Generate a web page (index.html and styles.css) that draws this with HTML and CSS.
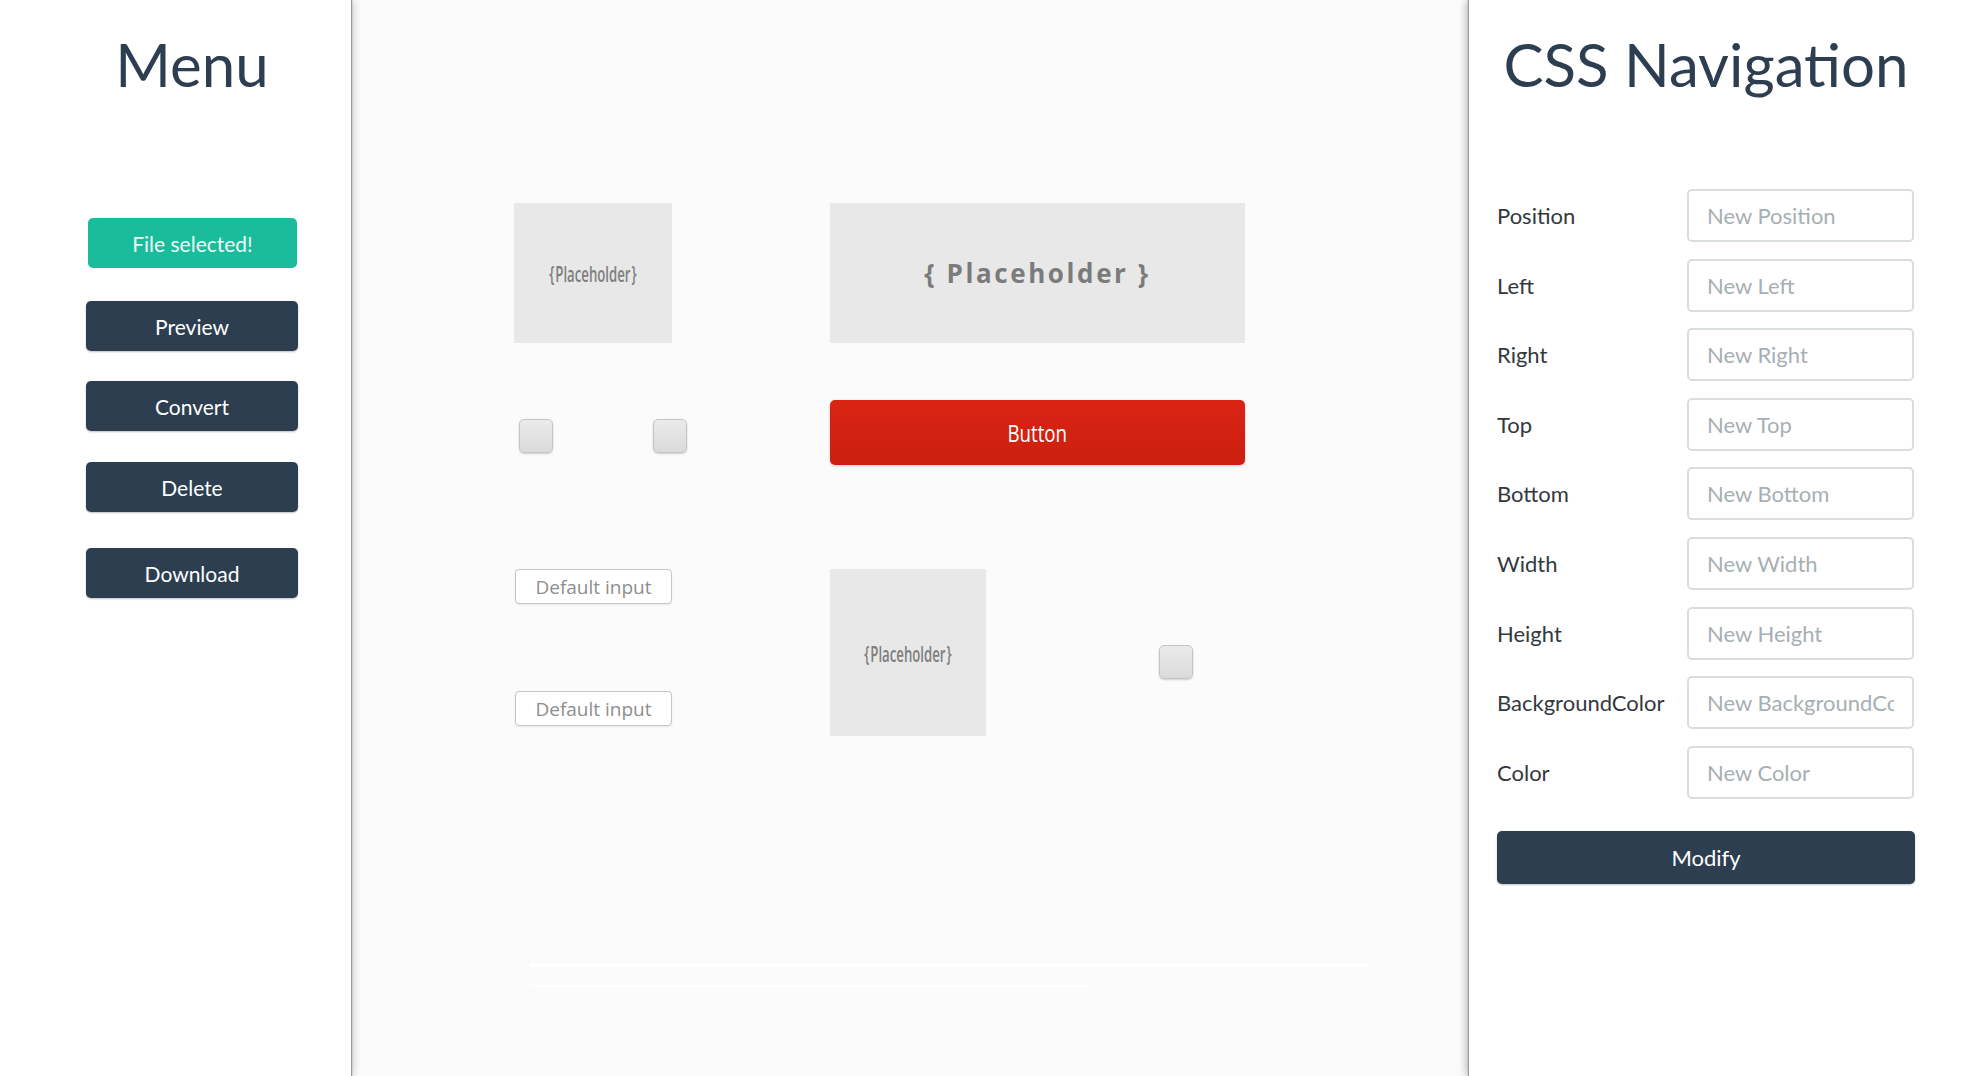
FILE: index.html
```html
<!DOCTYPE html>
<html lang="en">
<head>
<meta charset="utf-8">
<title>CSS Navigation</title>
<link rel="stylesheet" href="styles.css">
</head>
<body>
<div class="app">
  <aside class="menu">
    <h1 class="title">Menu</h1>
    <div class="menu-buttons">
      <label class="btn btn-file">File selected!</label>
      <button class="btn btn-dark btn-preview">Preview</button>
      <button class="btn btn-dark btn-convert">Convert</button>
      <button class="btn btn-dark btn-delete">Delete</button>
      <button class="btn btn-dark btn-download">Download</button>
    </div>
  </aside>

  <main class="stage">
    <div class="row row-1">
      <div class="ph ph-small"><span class="cond">{ Placeholder }</span></div>
      <div class="ph ph-large"><span class="ph-bold">{ Placeholder }</span></div>
    </div>
    <div class="row row-2">
      <div class="checks">
        <span class="check"></span>
        <span class="check"></span>
      </div>
      <button class="red-btn"><span class="cond-btn">Button</span></button>
    </div>
    <div class="row row-3">
      <div class="inputs">
        <input class="def-input" type="text" placeholder="Default input">
        <input class="def-input" type="text" placeholder="Default input">
      </div>
      <div class="ph ph-tall"><span class="cond">{ Placeholder }</span></div>
      <span class="check check-solo"></span>
    </div>
    <div class="line line-1"></div>
    <div class="line line-2"></div>
  </main>

  <aside class="nav">
    <h1 class="title">CSS Navigation</h1>
    <form class="props">
      <label class="prop-label">Position</label><input class="prop-input" placeholder="New Position">
      <label class="prop-label">Left</label><input class="prop-input" placeholder="New Left">
      <label class="prop-label">Right</label><input class="prop-input" placeholder="New Right">
      <label class="prop-label">Top</label><input class="prop-input" placeholder="New Top">
      <label class="prop-label">Bottom</label><input class="prop-input" placeholder="New Bottom">
      <label class="prop-label">Width</label><input class="prop-input" placeholder="New Width">
      <label class="prop-label">Height</label><input class="prop-input" placeholder="New Height">
      <label class="prop-label">BackgroundColor</label><input class="prop-input" placeholder="New BackgroundColor">
      <label class="prop-label">Color</label><input class="prop-input" placeholder="New Color">
    </form>
    <button class="btn btn-dark btn-modify">Modify</button>
  </aside>
</div>
</body>
</html>
```

FILE: styles.css
```css
* { box-sizing: border-box; }

html, body {
  margin: 0;
  padding: 0;
  height: 100%;
  overflow: hidden;
}

body {
  font-family: Lato, "Open Sans", "Liberation Sans", sans-serif;
  background: #fbfbfb;
}

.app {
  display: flex;
  height: 1076px;
}

/* ---------- side panels ---------- */
.menu {
  width: 351px;
  flex: none;
  background: #fff;
  padding-left: 86px;
  position: relative;
  z-index: 2;
  box-shadow: 1px 0 1px #9c9c9c, 2px 0 8px rgba(0, 0, 0, 0.22);
}

.nav {
  width: 505px;
  flex: none;
  background: #fff;
  padding-left: 28px;
  position: relative;
  z-index: 2;
  box-shadow: -1px 0 1px #9c9c9c, -3px 0 8px rgba(0, 0, 0, 0.25);
}

.title {
  margin: 28px 0 0;
  font-family: Lato, sans-serif;
  font-weight: 400;
  font-size: 60px;
  line-height: 72px;
  color: #2c3e50;
  text-align: center;
  white-space: nowrap;
}

.menu .title { width: 212px; }
.nav .title { width: 418px; }

.menu-buttons {
  display: flex;
  flex-direction: column;
  width: 212px;
  margin-top: 118px;
}

.btn {
  display: flex;
  align-items: center;
  justify-content: center;
  border: none;
  border-radius: 5px;
  font-family: Lato, sans-serif;
  font-size: 21px;
  font-weight: 400;
  color: #fff;
  padding: 0;
  height: 50px;
}

.btn-dark {
  background: #2c3e50;
  box-shadow: 0 1px 2px rgba(0, 0, 0, 0.25);
}

.btn-file {
  background: #1abc9c;
  color: #eafaf6;
  width: 209px;
  margin-left: 2px;
}

.btn-preview { margin-top: 33px; }
.btn-convert { margin-top: 30px; }
.btn-delete { margin-top: 31px; }
.btn-download { margin-top: 36px; }

/* ---------- property form ---------- */
.props {
  display: grid;
  grid-template-columns: 190px 227px;
  row-gap: 16.6px;
  margin-top: 89px;
  width: 418px;
}

.prop-label {
  display: flex;
  align-items: center;
  font-size: 22px;
  color: #33383d;
  white-space: nowrap;
  height: 53px;
}

.prop-input {
  height: 53px;
  width: 227px;
  border: 2px solid #d8dde0;
  border-radius: 5px;
  padding: 0 18px 0 18px;
  font-family: Lato, sans-serif;
  font-size: 22px;
  color: #34495e;
  background: #fff;
  outline: none;
}

.prop-input::placeholder { color: #a6afb2; }

.btn-modify {
  width: 418px;
  height: 53px;
  margin-top: 32px;
  font-size: 22px;
}

/* ---------- stage ---------- */
.stage {
  flex: 1;
  padding: 203px 0 0 163px;
  font-family: "Open Sans", sans-serif;
}

.row { display: flex; }

.row-1 { gap: 158px; }

.ph {
  background: #e8e8e8;
  display: flex;
  align-items: center;
  justify-content: center;
  color: #7e7e7e;
}

.ph-small { width: 158px; height: 140px; }
.ph-large { width: 415px; height: 140px; }
.ph-tall  { width: 156px; height: 167px; margin-left: 158px; }

.cond {
  display: inline-block;
  font-size: 22px;
  font-weight: 600;
  white-space: nowrap;
  word-spacing: -4px;
  transform: scaleX(0.6);
}

.ph-bold {
  font-size: 26px;
  font-weight: 700;
  letter-spacing: 2.6px;
  color: #7b7b7b;
  white-space: nowrap;
}

.row-2 {
  margin-top: 57px;
  align-items: center;
  height: 65px;
}

.checks {
  width: 316px;
  display: flex;
  gap: 100px;
  padding-left: 5px;
  margin-top: 7px;
}

.check {
  display: block;
  width: 34px;
  height: 34px;
  border: 1px solid #c4c4c4;
  border-radius: 5px;
  background: linear-gradient(#ebebeb, #dadada);
  box-shadow: 0 1px 2px rgba(0, 0, 0, 0.18);
  flex: none;
}

.red-btn {
  width: 415px;
  height: 65px;
  border: none;
  border-radius: 5px;
  background: linear-gradient(#da2414, #cb1f0f);
  box-shadow: 0 1px 3px rgba(0, 0, 0, 0.2);
  color: #fff;
  padding: 0;
  display: flex;
  align-items: center;
  justify-content: center;
}

.cond-btn {
  display: inline-block;
  font-family: "Open Sans", sans-serif;
  font-size: 24px;
  transform: scaleX(0.78);
}

.row-3 {
  margin-top: 104px;
  align-items: flex-start;
}

.inputs {
  width: 158px;
  display: flex;
  flex-direction: column;
  gap: 87px;
  padding-left: 1px;
}

.def-input {
  width: 157px;
  height: 35px;
  border: 1px solid #c6c6c6;
  border-radius: 4px;
  background: #fff;
  box-shadow: 0 1px 2px rgba(0, 0, 0, 0.08);
  font-family: "Open Sans", sans-serif;
  font-size: 19px;
  text-align: center;
  padding: 0;
  outline: none;
}

.def-input::placeholder { color: #8e8e8e; }

.check-solo {
  margin-left: 173px;
  margin-top: 76px;
}

.line {
  background: #ffffff;
}

.line-1 {
  width: 838px;
  height: 4px;
  margin: 227px 0 0 16px;
}

.line-2 {
  width: 561px;
  height: 2px;
  margin: 18px 0 0 17px;
}
```
